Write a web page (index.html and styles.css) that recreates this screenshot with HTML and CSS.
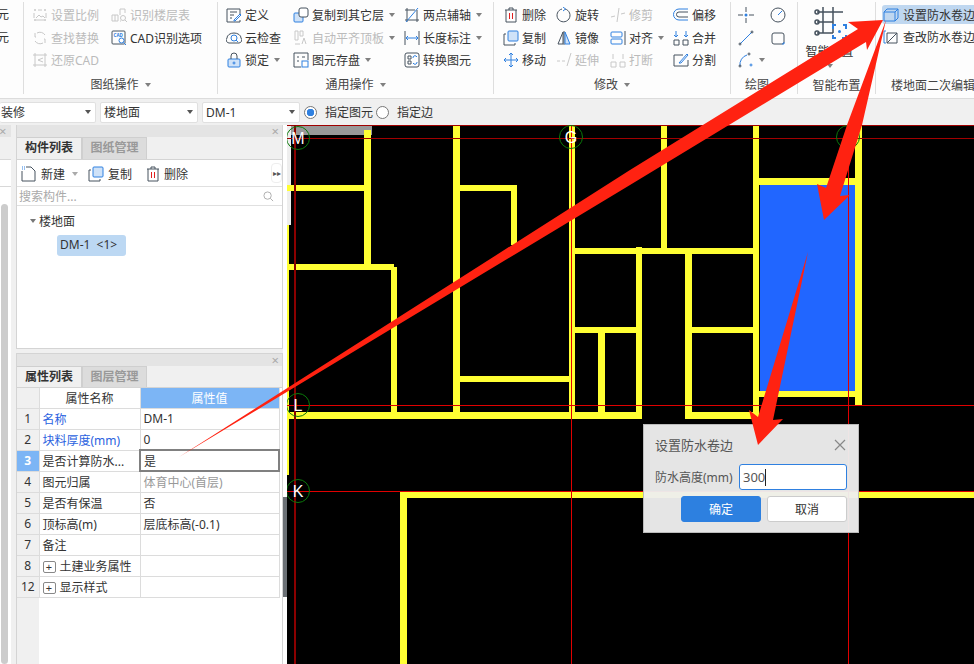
FILE: index.html
```html
<!DOCTYPE html>
<html lang="zh-CN">
<head>
    <meta charset="UTF-8">
    <title>设置防水卷边</title>
    <link rel="stylesheet" href="styles.css">
</head>
<body>
<div class="app">
    <!-- 功能区 -->
    <div class="ribbon">
        <div class="group group-cut">
            <div class="cut">元</div>
            <div class="cut">元</div>
        </div>

        <div class="group group-cad">
            <div class="tools">
                <div class="tool off"><svg class="ic" viewBox="0 0 16 16"><path d="M2 3h2M6 3h4M12 3h2M3 2v2M13 2v2M2 13h12M3 12v2M13 12v2M2 6v5M14 6v5M4 11l3-3 2 2 2-1 2 2"/></svg>设置比例</div>
                <div class="tool off"><svg class="ic" viewBox="0 0 16 16"><path d="M1 8h6v6H1zM4 8v6M9 2h5v4M9 2v6M9 14h1"/><circle cx="12" cy="11" r="2.5"/><path d="M14 13l2 2"/></svg>识别楼层表</div>
                <div class="tool off"><svg class="ic" viewBox="0 0 16 16"><path d="M13 5a6 6 0 0 0-8-2M3 11a6 6 0 0 0 8 2M3 3v4h1M13 13V9h-1"/></svg>查找替换</div>
                <div class="tool"><svg class="ic" viewBox="0 0 16 16"><rect x="1" y="1" width="13" height="13" rx="1"/><text x="2.5" y="6.5" class="ic-cad">CAD</text><circle class="b" cx="10.5" cy="10.5" r="2.5"/><path class="b" d="M12.5 12.5l2.5 2.5"/></svg>CAD识别选项</div>
                <div class="tool off"><svg class="ic" viewBox="0 0 16 16"><path d="M1 3h14M1 13h14M3 1v14M13 1v14M11 6L6 8l5 2"/></svg>还原CAD</div>
            </div>
            <div class="group-name">图纸操作<i class="caret"></i></div>
        </div>

        <div class="group group-common">
            <div class="tools">
                <div class="tool"><svg class="ic" viewBox="0 0 16 16"><path d="M14 7V2H1v13h13v-2M4 5h7M4 8h4M4 11h2"/><path class="b" d="M8 13l6-6 1 1-6 6H8z"/></svg>定义</div>
                <div class="tool"><svg class="ic" viewBox="0 0 16 16"><rect class="fill-b" x="1" y="6" width="9" height="9" rx="1"/><rect class="fill-w" x="6" y="1" width="9" height="9" rx="2"/></svg>复制到其它层<i class="caret"></i></div>
                <div class="tool"><svg class="ic" viewBox="0 0 16 16"><path d="M3 1v14M1 13h14M1 3h10"/><path class="b" d="M2 15L14 1"/><path d="M13 3v12"/></svg>两点辅轴<i class="caret"></i></div>
                <div class="tool"><svg class="ic" viewBox="0 0 16 16"><path d="M1 8a7 5 0 0 1 14 0 3 3 0 0 1-2 5H3a3 3 0 0 1-2-5z"/><circle class="b" cx="8" cy="8" r="3"/><path class="b" d="M10 10l2 2"/></svg>云检查</div>
                <div class="tool off"><svg class="ic" viewBox="0 0 16 16"><path d="M2 1h3v9H2zM7 1h3v5H7zM9 14l2-6 2 6M2 14h5"/></svg>自动平齐顶板<i class="caret"></i></div>
                <div class="tool"><svg class="ic" viewBox="0 0 16 16"><path d="M1 1v14M15 1v14"/><path class="b" d="M2 8h12M4 6L2 8l2 2M12 6l2 2-2 2"/></svg>长度标注<i class="caret"></i></div>
                <div class="tool"><svg class="ic" viewBox="0 0 16 16"><rect class="fill-b" x="2" y="7" width="12" height="8" rx="1"/><path d="M5 7V4a3 3 0 0 1 6 0v3"/><circle class="b" cx="8" cy="11" r="1"/></svg>锁定<i class="caret"></i></div>
                <div class="tool"><svg class="ic" viewBox="0 0 16 16"><path d="M15 8V1H1v14h7M4 5h2M9 5h3M4 9h2"/><rect class="b" x="9" y="9" width="6" height="6"/></svg>图元存盘<i class="caret"></i></div>
                <div class="tool"><svg class="ic" viewBox="0 0 16 16"><rect x="1" y="1" width="14" height="14" rx="2"/><path d="M4 4h3v3H4zM4 9h3v3H4z"/><path class="b" d="M9 6a2 2 0 0 1 3-2l1 1M13 10a2 2 0 0 1-3 2l-1-1"/></svg>转换图元</div>
            </div>
            <div class="group-name">通用操作<i class="caret"></i></div>
        </div>

        <div class="group group-edit">
            <div class="tools">
                <div class="tool"><svg class="ic" viewBox="0 0 16 16"><path d="M2 3h12M6 3V1h4v2M3 3v12h10V3"/><path class="r" d="M6.500 6v6M9.500 6v6"/></svg>删除</div>
                <div class="tool"><svg class="ic" viewBox="0 0 16 16"><path d="M9 2a6.500 6.500 0 1 1-3 0"/><path class="b" d="M7 0l2.500 2L7 4"/></svg>旋转</div>
                <div class="tool off"><svg class="ic" viewBox="0 0 16 16"><path d="M1 10l4-1M7 15L9 1M11 7l4-1"/></svg>修剪</div>
                <div class="tool"><svg class="ic" viewBox="0 0 16 16"><path class="b" d="M15 2H6a5 5 0 0 0 0 11h9"/><path d="M15 5H6a2 2 0 0 0 0 5h9"/></svg>偏移</div>
                <div class="tool"><svg class="ic" viewBox="0 0 16 16"><rect class="fill-b" x="5" y="1" width="10" height="10" rx="1"/><path d="M3 4H1v11h11v-2"/></svg>复制</div>
                <div class="tool"><svg class="ic" viewBox="0 0 16 16"><path d="M7 2L2 14h5zM8 1v14"/><path class="fill-b" d="M9 2l5 12H9z"/></svg>镜像</div>
                <div class="tool"><svg class="ic" viewBox="0 0 16 16"><rect class="b" x="1" y="2" width="11" height="5" rx="1"/><rect class="b" x="1" y="9" width="11" height="5" rx="1"/><path d="M15 1v14"/></svg>对齐<i class="caret"></i></div>
                <div class="tool"><svg class="ic" viewBox="0 0 16 16"><path d="M1 10h5v5H1zM10 10h5v5h-5z"/><path class="b" d="M3 1v6M1 5l2 2 2-2M13 1v6M11 5l2 2 2-2"/></svg>合并</div>
                <div class="tool"><svg class="ic" viewBox="0 0 16 16"><g class="b"><path d="M8 1v14M1 8h14M6 3l2-2 2 2M6 13l2 2 2-2M3 6L1 8l2 2M13 6l2 2-2 2"/></g></svg>移动</div>
                <div class="tool off"><svg class="ic" viewBox="0 0 16 16"><path d="M1 9h3M6 9h3M11 14l4-13"/></svg>延伸</div>
                <div class="tool off"><svg class="ic" viewBox="0 0 16 16"><path d="M1 10h5v5H1zM10 10h5v5h-5zM3 2v5M13 2v5"/></svg>打断</div>
                <div class="tool"><svg class="ic" viewBox="0 0 16 16"><path d="M10 3H1v11h14V8"/><path class="b" d="M6 11l8-9 1 1-7 8z"/></svg>分割</div>
            </div>
            <div class="group-name">修改<i class="caret"></i></div>
        </div>

        <div class="group group-draw">
            <div class="tools">
                <div class="tool"><svg class="ic" viewBox="0 0 16 16"><path d="M8 0v5M8 11v5M0 8h5M11 8h5"/><circle class="fill-blue" cx="8" cy="8" r="1.500"/></svg></div>
                <div class="tool"><svg class="ic" viewBox="0 0 16 16"><circle cx="8" cy="8" r="7"/><path class="b" d="M8 8l4-4"/></svg></div>
                <div class="tool"><svg class="ic" viewBox="0 0 16 16"><path class="b" d="M2 14L14 2"/><circle cx="2" cy="14" r="1"/><circle cx="14" cy="2" r="1"/></svg></div>
                <div class="tool"><svg class="ic" viewBox="0 0 16 16"><rect x="2" y="3" width="12" height="11" rx="2"/><path class="b" d="M12 14h2v-2"/></svg></div>
                <div class="tool"><svg class="ic" viewBox="0 0 16 16"><path class="b" d="M2 14a10 10 0 0 1 7-11"/><circle cx="2" cy="14" r="1"/><circle cx="11" cy="2" r="1"/><circle class="b" cx="13" cy="13" r="1"/></svg><i class="caret"></i></div>
            </div>
            <div class="group-name group-name-draw">绘图<i class="caret"></i></div>
        </div>

        <div class="group group-smart">
            <div class="big-tool">
                <svg class="big-ic" viewBox="0 0 34 34"><path d="M10 2v26M20 2v26M4 7h26M4 17h16M4 28h16"/><circle cx="4" cy="7" r="2"/><circle cx="4" cy="17" r="2"/><circle cx="4" cy="28" r="2"/><path class="b" d="M20 24v-4h3M30 20h3v4M33 30v3h-4M23 33h-3v-3"/><circle class="fill-blue" cx="26.500" cy="26.500" r="1.500"/></svg>
                <div>智能布置</div>
                <i class="caret"></i>
            </div>
            <div class="group-name group-name-low">智能布置</div>
        </div>

        <div class="group group-floor">
            <div class="floor-tools">
                <div class="tool tool-on"><svg class="ic" viewBox="0 0 16 16"><g class="b"><path d="M1 5l3-3h11v9l-3 3H1zM1 5h11v9M12 5l3-3"/></g></svg>设置防水卷边</div>
                <div class="tool"><svg class="ic" viewBox="0 0 16 16"><path class="b" d="M3 2H1v12h2"/><path d="M4 14V4h10v10zM4 14L14 4"/></svg>查改防水卷边</div>
            </div>
            <div class="group-name group-name-low group-name-left">楼地面二次编辑</div>
        </div>
    </div>

    <!-- 选择条 -->
    <div class="optbar">
        <div class="sel sel-first">装修<i class="caret"></i></div>
        <div class="sel">楼地面<i class="caret"></i></div>
        <div class="sel">DM-1<i class="caret"></i></div>
        <span class="radio radio-on"></span><span class="radio-text">指定图元</span>
        <span class="radio"></span><span class="radio-text">指定边</span>
    </div>

    <div class="main">
        <!-- 最左边被挤窄的面板 -->
        <div class="rail">
            <div class="rail-panel">
                <div class="panel-head"><span class="close">×</span></div>
                <div class="rail-tabs"></div>
                <div class="rail-tool"></div>
                <div class="rail-body"><div class="scroll-thumb"></div></div>
            </div>
        </div>

        <div class="panels">
            <div class="panel panel-list">
                <div class="panel-head"><span class="close">×</span></div>
                <div class="tabs">
                    <div class="tab tab-on">构件列表</div>
                    <div class="tab">图纸管理</div>
                </div>
                <div class="toolbar">
                    <div class="bar-btn bar-new"><svg class="ic" viewBox="0 0 16 16"><path d="M1 5v10h13V5l-4-4H5"/><path class="b" d="M1 1h1M3 1h1M1 3h1M3 3h1"/></svg>新建<i class="caret"></i></div>
                    <div class="bar-btn bar-copy"><svg class="ic" viewBox="0 0 16 16"><rect class="fill-b" x="5" y="1" width="10" height="10" rx="1"/><path d="M3 4H1v11h11v-2"/></svg>复制</div>
                    <div class="bar-btn bar-del"><svg class="ic" viewBox="0 0 16 16"><path d="M2 3h12M6 3V1h4v2M3 3v12h10V3"/><path class="r" d="M6.500 6v6M9.500 6v6"/></svg>删除</div>
                    <div class="bar-more">▸▸</div>
                </div>
                <div class="search">
                    <span>搜索构件...</span>
                    <svg class="ic ic-search" viewBox="0 0 12 12"><circle cx="5" cy="5" r="4"/><path d="M8 8l3 3"/></svg>
                </div>
                <div class="tree">
                    <div class="tree-root"><i class="caret"></i>楼地面</div>
                    <div class="tree-leaf">DM-1&nbsp; &lt;1&gt;</div>
                </div>
            </div>

            <div class="panel panel-props">
                <div class="panel-head"><span class="close">×</span></div>
                <div class="tabs">
                    <div class="tab tab-on">属性列表</div>
                    <div class="tab">图层管理</div>
                </div>
                <div class="props-body">
                    <table class="props">
                        <tr class="props-head"><th class="num"></th><th>属性名称</th><th class="val-head">属性值</th></tr>
                        <tr><td class="num">1</td><td class="link">名称</td><td>DM-1</td></tr>
                        <tr><td class="num">2</td><td class="link">块料厚度(mm)</td><td>0</td></tr>
                        <tr><td class="num num-on">3</td><td>是否计算防水...</td><td class="val-on">是</td></tr>
                        <tr><td class="num">4</td><td>图元归属</td><td class="muted">体育中心(首层)</td></tr>
                        <tr><td class="num">5</td><td>是否有保温</td><td>否</td></tr>
                        <tr><td class="num">6</td><td>顶标高(m)</td><td>层底标高(-0.1)</td></tr>
                        <tr><td class="num">7</td><td>备注</td><td></td></tr>
                        <tr><td class="num">8</td><td><span class="plus">+</span>土建业务属性</td><td></td></tr>
                        <tr><td class="num">12</td><td><span class="plus">+</span>显示样式</td><td></td></tr>
                    </table>
                </div>
            </div>
        </div>

        <div class="splitter"><div class="splitter-grip"></div></div>

        <!-- 绘图区 -->
        <div class="canvas">
            <svg class="drawing" viewBox="287 125 687 539">
                <rect x="287" y="125" width="85" height="10" fill="#999"/>
                <rect x="287" y="125" width="4" height="100" fill="#eee"/>
                <rect x="760" y="185" width="95" height="206" fill="#2166ff"/>
                <g fill="#ffff33">
                    <rect x="364" y="130" width="7" height="140"/>
                    <rect x="287" y="185" width="77" height="6"/>
                    <rect x="287" y="264" width="107" height="6"/>
                    <rect x="391" y="267" width="6" height="150"/>
                    <rect x="287" y="225" width="2" height="250"/>
                    <rect x="287" y="412" width="355" height="7"/>
                    <rect x="453" y="125" width="7" height="290"/>
                    <rect x="460" y="185" width="57" height="6"/>
                    <rect x="511" y="185" width="6" height="60"/>
                    <rect x="460" y="376" width="109" height="6"/>
                    <rect x="569" y="125" width="6" height="290"/>
                    <rect x="575" y="248" width="178" height="6"/>
                    <rect x="575" y="327" width="65" height="6"/>
                    <rect x="598" y="333" width="7" height="80"/>
                    <rect x="661" y="125" width="6" height="123"/>
                    <rect x="636" y="247" width="6" height="172"/>
                    <rect x="685" y="254" width="7" height="165"/>
                    <rect x="692" y="327" width="61" height="6"/>
                    <rect x="685" y="412" width="74" height="7"/>
                    <rect x="753" y="125" width="6" height="294"/>
                    <rect x="855" y="125" width="7" height="280"/>
                    <rect x="759" y="178" width="96" height="7"/>
                    <rect x="753" y="391" width="109" height="6"/>
                    <rect x="400" y="492" width="574" height="6"/>
                    <rect x="400" y="492" width="7" height="172"/>
                </g>
                <g stroke-width="1">
                    <path d="M287 125.500H974M287 138.500H974" stroke="#a00000"/>
                    <path d="M287 405.500H974M287 491.500H974" stroke="#e00000"/>
                    <path d="M571.500 125V664M848.500 125V664" stroke="#e00000"/>
                    <path d="M295 125V664" stroke="#8b0000" stroke-width="2"/>
                </g>
                <g fill="none" stroke="#0a7a0a">
                    <circle cx="298" cy="138" r="11.500"/>
                    <circle cx="571" cy="137" r="11.500"/>
                    <circle cx="848" cy="137" r="11.500"/>
                    <circle cx="298" cy="405" r="11.500"/>
                    <circle cx="298" cy="491" r="11.500"/>
                </g>
                <g class="axis">
                    <text x="298" y="144">M</text>
                    <text x="571" y="143">G</text>
                    <text x="298" y="411">L</text>
                    <text x="298" y="497">K</text>
                </g>
            </svg>

            <!-- 弹窗 -->
            <div class="dialog">
                <div class="dialog-head">
                    <span>设置防水卷边</span>
                    <svg class="dialog-close" viewBox="0 0 12 12"><path d="M1 1l10 10M11 1L1 11"/></svg>
                </div>
                <div class="dialog-row">
                    <label>防水高度(mm)</label>
                    <div class="input">300<i class="cursor"></i></div>
                </div>
                <div class="dialog-btns">
                    <div class="btn btn-ok">确定</div>
                    <div class="btn">取消</div>
                </div>
            </div>
        </div>
    </div>

    <!-- 截图上的红色箭头 -->
    <svg class="marks" viewBox="0 0 974 664">
        <path d="M179 457L630 170L858 29L848 22L883 20L867 50L866 42L630 185z"/>
        <path d="M886 20L862 125L840 196L850 195L824 220L817 184L826 188L847 125z"/>
        <path d="M808 252L773 420L783 419L758 445L749 410L758 417z"/>
    </svg>
</div>
</body>
</html>
```

FILE: styles.css
```css
/* 基本设置 */
* {
    box-sizing: border-box;
}

body {
    margin: 0;
    overflow: hidden;
    font-family: "Noto Sans", "Noto Sans CJK SC", sans-serif;
    font-size: 12px;
    color: #333;
}

.app {
    position: relative;
    width: 974px;
    height: 664px;
    overflow: hidden;
    background: #f0f0f0;
}

/* 通用图标 */
.ic {
    flex: none;
    width: 16px;
    height: 16px;
    fill: none;
    stroke: #46525e;
    stroke-width: 1;
}

.ic .b { stroke: #2f80e0; }
.ic .r { stroke: #e02020; }
.ic .fill-b { fill: #cfe2f8; stroke: #2f80e0; }
.ic .fill-w { fill: #fff; }
.ic .fill-blue, .big-ic .fill-blue { fill: #2f80e0; stroke: none; }
.ic-cad { font-size: 4.500px; font-weight: 700; fill: #2f80e0; stroke: none; }

.caret {
    display: inline-block;
    width: 0;
    height: 0;
    border-left: 3.500px solid transparent;
    border-right: 3.500px solid transparent;
    border-top: 4px solid #808080;
}

/* 功能区 */
.ribbon {
    display: flex;
    height: 99px;
    padding-top: 2px;
    background: #fdfdfd;
    border-bottom: 1px solid #dcdcdc;
}

.group {
    flex: none;
    height: 92px;
    border-right: 1px solid #dedede;
    overflow: hidden;
}

.group-cut { width: 24px; padding-top: 2px; }
.group-cad { width: 194px; }
.group-common { width: 276px; }
.group-edit { width: 237px; }
.group-draw { width: 67px; }
.group-smart { width: 78px; }
.group-floor { flex: 1; border-right: none; }

.cut {
    height: 22.500px;
    line-height: 22px;
    margin-left: -3px;
}

.tools {
    display: grid;
    grid-template-rows: 22px 23px 22px;
    height: 72px;
    padding-top: 2px;
}

.group-cad .tools { grid-template-columns: 79px 1fr; padding-left: 8px; }
.group-common .tools { grid-template-columns: 67px 111px 1fr; padding-left: 8px; }
.group-edit .tools { grid-template-columns: 53px 54px 63px 1fr; padding-left: 9px; }
.group-draw .tools { grid-template-columns: 32px 1fr; padding-left: 7px; }

.tool {
    display: flex;
    align-items: center;
    gap: 3px;
    white-space: nowrap;
}

.tool .caret { margin-left: 2px; }
.tool.off { color: #bbb; }
.off .ic { stroke: #c8c8c8; }

.group-name {
    height: 18px;
    padding-top: 2px;
    line-height: 18px;
    text-align: center;
    color: #444;
}

.group-name .caret { margin-left: 6px; vertical-align: 2px; }

.group-name-draw { padding-left: 14px; text-align: left; }
.group-name-low { padding-top: 3px; }

.group-name-left {
    padding-left: 15px;
    text-align: left;
    white-space: nowrap;
}

.big-tool {
    display: flex;
    flex-direction: column;
    align-items: center;
    height: 72px;
    padding: 3px 14px 0 0;
    line-height: 16px;
}

.big-tool .caret { margin-top: 4px; }

.big-ic {
    width: 34px;
    height: 34px;
    margin-bottom: 5px;
    fill: none;
    stroke: #46525e;
    stroke-width: 1.500;
}

.big-ic .b { stroke: #2f80e0; stroke-width: 2; }

.floor-tools {
    display: flex;
    flex-direction: column;
    gap: 3px;
    height: 72px;
    padding: 3px 0 0 6px;
}

.floor-tools .tool {
    height: 19px;
    padding-left: 1px;
    gap: 4px;
    border-radius: 3px 0 0 3px;
}

.floor-tools .tool-on { background: #bfd7f0; }

/* 选择条 */
.optbar {
    display: flex;
    align-items: center;
    height: 26px;
    background: #f0f0f0;
}

.sel {
    display: flex;
    align-items: center;
    justify-content: space-between;
    width: 98px;
    height: 21px;
    margin-right: 4px;
    padding: 0 4px 0 3px;
    background: #fff;
    border: 1px solid #e0e0e0;
    border-radius: 2px;
}

.sel-first {
    width: 96px;
    padding-left: 1px;
    border-left: none;
}

.sel .caret { border-top-color: #555; }

.radio {
    width: 13px;
    height: 13px;
    background: #fff;
    border: 1px solid #777;
    border-radius: 50%;
}

.radio-on {
    background: radial-gradient(circle, #2f80e0 3.500px, #fff 4px);
}

.radio-text { margin: 0 3px 0 8px; }

/* 主体 */
.main {
    display: flex;
    height: 539px;
}

.rail {
    flex: none;
    width: 16px;
}

.rail-panel {
    display: flex;
    flex-direction: column;
    width: 11px;
    height: 100%;
    overflow: hidden;
}

.rail-panel .panel-head { justify-content: flex-start; }
.rail-panel .close { margin: 0 0 0 -1px; }

.rail-tabs { height: 22px; }

.rail-tool {
    height: 28px;
    background: #fff;
    border-top: 1px solid #d8d8d8;
    border-bottom: 1px solid #d8d8d8;
}

.rail-body {
    flex: 1;
    padding-top: 17px;
    background: #fff;
}

.scroll-thumb {
    width: 7px;
    height: 100%;
    margin-left: 1px;
    background: #ccc;
    border-radius: 4px;
}

.panels {
    display: flex;
    flex-direction: column;
    flex: none;
    gap: 4px;
    width: 267px;
}

.panel {
    display: flex;
    flex-direction: column;
    background: #f0f0f0;
    border: 1px solid #d4d4d4;
    border-top: none;
}

.panel-list { height: 224px; }
.panel-props { height: 311px; border-top: 1px solid #d4d4d4; border-bottom: none; }

.panel-head {
    display: flex;
    align-items: center;
    justify-content: flex-end;
    flex: none;
    height: 12px;
    background: #e4e4e4;
}

.close {
    margin-right: 3px;
    font-size: 13px;
    line-height: 12px;
    color: #aaa;
}

.tabs {
    display: flex;
    flex: none;
    height: 23px;
    border-bottom: 1px solid #d4d4d4;
}

.panel-props .tabs { height: 22px; }

.tab {
    width: 65px;
    line-height: 20px;
    text-align: center;
    color: #999;
    font-weight: 700;
    background: #dcdcdc;
    border: 1px solid #cfcfcf;
    border-bottom: none;
}

.tab-on {
    color: #333;
    background: #f0f0f0;
    border-left: none;
}

.toolbar {
    display: flex;
    align-items: center;
    flex: none;
    height: 27px;
    padding: 1px 0 0 4px;
    background: #fff;
    border-bottom: 1px solid #e0e0e0;
}

.bar-btn {
    display: flex;
    align-items: center;
    gap: 4px;
}

.bar-new { width: 67px; }
.bar-new .caret { margin-left: 3px; border-top-color: #aaa; }
.bar-copy { width: 57px; }
.bar-del { width: 126px; gap: 3px; }

.bar-more {
    width: 11px;
    height: 20px;
    margin-top: -1px;
    font-size: 8px;
    line-height: 18px;
    text-align: center;
    color: #555;
    border: 1px solid #eee;
    border-radius: 4px;
    white-space: nowrap;
    overflow: hidden;
}

.search {
    display: flex;
    align-items: center;
    justify-content: space-between;
    flex: none;
    height: 19px;
    padding: 0 8px 0 2px;
    color: #aaa;
    background: #fff;
    border-bottom: 1px solid #e0e0e0;
}

.ic-search { width: 11px; height: 11px; stroke: #aaa; }

.tree {
    flex: 1;
    padding: 5px 0 0 13px;
    background: #fff;
}

.tree-root {
    display: flex;
    align-items: center;
    gap: 3px;
    height: 20px;
}

.tree-root .caret { border-top-color: #777; }

.tree-leaf {
    width: 69px;
    height: 21px;
    margin: 4px 0 0 27px;
    padding-left: 3px;
    line-height: 20px;
    white-space: nowrap;
    background: #bcd8f3;
    border-radius: 3px;
}

/* 属性表 */
.props-body {
    flex: 1;
    background: linear-gradient(90deg, #f0f0f0 22px, #fff 22px);
}

.props {
    width: 263px;
    table-layout: fixed;
    border-collapse: collapse;
}

.props th, .props td {
    height: 21px;
    padding: 0 3px;
    font-weight: 400;
    white-space: nowrap;
    border: 1px solid #dcdcdc;
    border-left: none;
    border-top: none;
    background: #fff;
}

.props .props-head th { height: 20px; text-align: center; padding: 0; }
.props .num {
    width: 22px;
    padding: 0;
    text-align: center;
    background: #f0f0f0;
}

.props th:nth-child(2), .props td:nth-child(2) { width: 101px; }

.props .props-head .val-head { color: #fff; background: #7cb5f5; }
.props .num-on { color: #fff; font-weight: 700; background: #7cb5f5; }
.props .link { color: #2a62e0; }
.props .muted { color: #999; }
.props .val-on { border: 2px solid #808080; }

.plus {
    display: inline-block;
    width: 13px;
    height: 12px;
    margin: 0 4px 0 0;
    font-size: 11px;
    line-height: 10px;
    text-align: center;
    border: 1px solid #888;
    border-radius: 2px;
}

.splitter {
    flex: none;
    display: flex;
    align-items: flex-start;
    width: 4px;
    background: #fff;
}

.splitter-grip {
    width: 4px;
    height: 100px;
    margin-top: 372px;
    background: #6b7075;
}

/* 绘图区 */
.canvas {
    position: relative;
    flex: 1;
    background: #000;
}

.drawing {
    display: block;
    width: 687px;
    height: 539px;
}

.axis text {
    font-family: "Liberation Sans", sans-serif;
    font-size: 16px;
    text-anchor: middle;
    fill: #fff;
}

.dialog {
    position: absolute;
    left: 356px;
    top: 299px;
    width: 216px;
    height: 109px;
    padding: 0 11px;
    background: rgba(238, 238, 238, 0.96);
    border: 1px solid #bbb;
}

.dialog-head {
    display: flex;
    align-items: center;
    justify-content: space-between;
    height: 39px;
    font-size: 13px;
    color: #555;
}

.dialog-close {
    width: 12px;
    height: 12px;
    margin-right: 1px;
    fill: none;
    stroke: #888;
    stroke-width: 1.200;
}

.dialog-row {
    display: flex;
    align-items: center;
    justify-content: space-between;
    height: 26px;
    color: #555;
}

.input {
    display: flex;
    align-items: center;
    width: 108px;
    height: 26px;
    padding-left: 3px;
    font-size: 13px;
    background: #fff;
    border: 1px solid #2f80e0;
    border-radius: 3px;
}

.cursor {
    width: 1px;
    height: 17px;
    background: #222;
}

.dialog-btns {
    display: flex;
    justify-content: flex-end;
    gap: 6px;
    margin-top: 6px;
}

.btn {
    width: 80px;
    height: 26px;
    line-height: 25px;
    text-align: center;
    background: #fff;
    border: 1px solid #ccc;
    border-radius: 3px;
}

.btn-ok {
    color: #fff;
    background: #2d80e0;
    border-color: #2d80e0;
}

.marks {
    position: absolute;
    left: 0;
    top: 0;
    width: 974px;
    height: 664px;
    fill: #ff2211;
}
```
